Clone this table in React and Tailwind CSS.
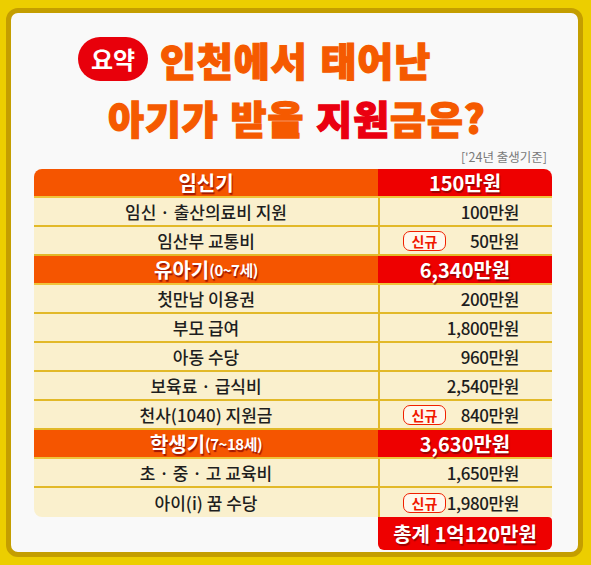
const SECTIONS = [
  {
    title: "임신기",
    sub: null,
    total: "150만원",
    items: [
      ["임신 · 출산의료비 지원", "100만원"],
      ["임산부 교통비", "50만원", true],
    ],
  },
  {
    title: "유아기",
    sub: "(0~7세)",
    total: "6,340만원",
    items: [
      ["첫만남 이용권", "200만원"],
      ["부모 급여", "1,800만원"],
      ["아동 수당", "960만원"],
      ["보육료 · 급식비", "2,540만원"],
      ["천사(1040) 지원금", "840만원", true],
    ],
  },
  {
    title: "학생기",
    sub: "(7~18세)",
    total: "3,630만원",
    items: [
      ["초 · 중 · 고 교육비", "1,650만원"],
      ["아이(i) 꿈 수당", "1,980만원", true],
    ],
  },
];

const FONT = "font-['Noto_Sans_CJK_KR','Noto_Sans',sans-serif]";
const SHADOW = "[text-shadow:1px_2px_1px_rgba(130,0,0,0.75)]";
const TITLE =
  "text-[39px] font-black leading-none tracking-[1px] text-[#f55a00] [-webkit-text-stroke:1.3px_currentcolor] [text-shadow:0_0_2px_#fff1c4]";

function NewBadge() {
  return (
    <span className="flex h-[20px] w-[43px] shrink-0 items-center justify-center rounded-[7px] border-[1.5px] border-[#f02000] bg-[#fff8ec] text-[14px] font-bold leading-none text-[#f01800]">
      신규
    </span>
  );
}

function HeaderRow({ title, sub, total, first }) {
  return (
    <>
      <div
        className={`flex h-[29px] items-center justify-center border-b-2 border-[#f0c43a] bg-[#f55500] text-[20px] font-bold leading-none text-white ${SHADOW} ${
          first ? "rounded-tl-[8px]" : ""
        }`}
      >
        <span>{title}</span>
        {sub && <span className="text-[15px] tracking-[-0.5px]">{sub}</span>}
      </div>
      <div
        className={`flex h-[29px] items-center justify-center border-b-2 border-[#f0c43a] bg-[#ee0000] text-[20px] font-bold leading-none text-white ${SHADOW} ${
          first ? "rounded-tr-[8px]" : ""
        }`}
      >
        {total}
      </div>
    </>
  );
}

function ItemRow({ label, value, isNew, last }) {
  const border = last ? "" : "border-b-2 border-[#e2b928]";
  return (
    <>
      <div
        className={`flex h-[29px] items-center justify-center bg-[#faf0cd] text-[17px] font-medium leading-none text-[#1e1e1e] ${border} ${
          last ? "rounded-bl-[8px]" : ""
        }`}
      >
        {label}
      </div>
      <div
        className={`flex h-[29px] items-center border-l-2 border-l-[#e2b928] bg-[#faf0cd] pl-[23px] pr-[33px] text-[17px] font-medium leading-none text-[#1e1e1e] ${border} ${
          isNew ? "justify-between" : "justify-end"
        }`}
      >
        {isNew && <NewBadge />}
        <span className="whitespace-nowrap tracking-[-0.4px]">{value}</span>
      </div>
    </>
  );
}

function Section({ section, first, lastSection }) {
  return (
    <>
      <HeaderRow title={section.title} sub={section.sub} total={section.total} first={first} />
      {section.items.map(([label, value, isNew], i) => (
        <ItemRow
          key={label}
          label={label}
          value={value}
          isNew={isNew}
          last={lastSection && i === section.items.length - 1}
        />
      ))}
    </>
  );
}

export default function App() {
  return (
    <div className={`h-[565px] w-[591px] bg-[#ecce00] pl-[6px] pt-[8px] ${FONT}`}>
      <div className="h-[549px] w-[577px] rounded-[12px] border-[5px] border-[#c49e00] bg-[#f9f9f9]">
        {/* Title */}
        <div className="ml-[67px] mt-[24px] flex h-[44px] items-center gap-[12px]">
          <span className="flex h-[44px] w-[70px] items-center justify-center rounded-full bg-[#e8000b] text-[24px] font-bold leading-none text-white">
            요약
          </span>
          <span className={`whitespace-pre [word-spacing:3px] ${TITLE}`}>인천에서 태어난</span>
        </div>
        <div className={`ml-[97px] mt-[14px] flex h-[44px] items-center whitespace-pre [word-spacing:2px] ${TITLE}`}>
          아기가 받을 <span className="text-[#ea0010]">지원</span>금은?
        </div>

        <div className="mr-[31px] mt-[11px] flex h-[14px] items-center justify-end text-[12.5px] leading-none text-[#7a7a7a]">
          ['24년 출생기준]
        </div>

        {/* Table */}
        <div className="ml-[23px] mt-[5px] grid w-[518px] grid-cols-[344px_174px]">
          {SECTIONS.map((s, si) => (
            <Section key={s.title} section={s} first={si === 0} lastSection={si === SECTIONS.length - 1} />
          ))}
          <div />
          <div className="flex h-[33px] items-center justify-center rounded-b-[6px] rounded-tr-[4px] bg-[#ee0000] text-[20px] font-bold leading-none text-white [text-shadow:1px_2px_1px_rgba(130,0,0,0.75)]">
            총계 1억120만원
          </div>
        </div>
      </div>
    </div>
  );
}
